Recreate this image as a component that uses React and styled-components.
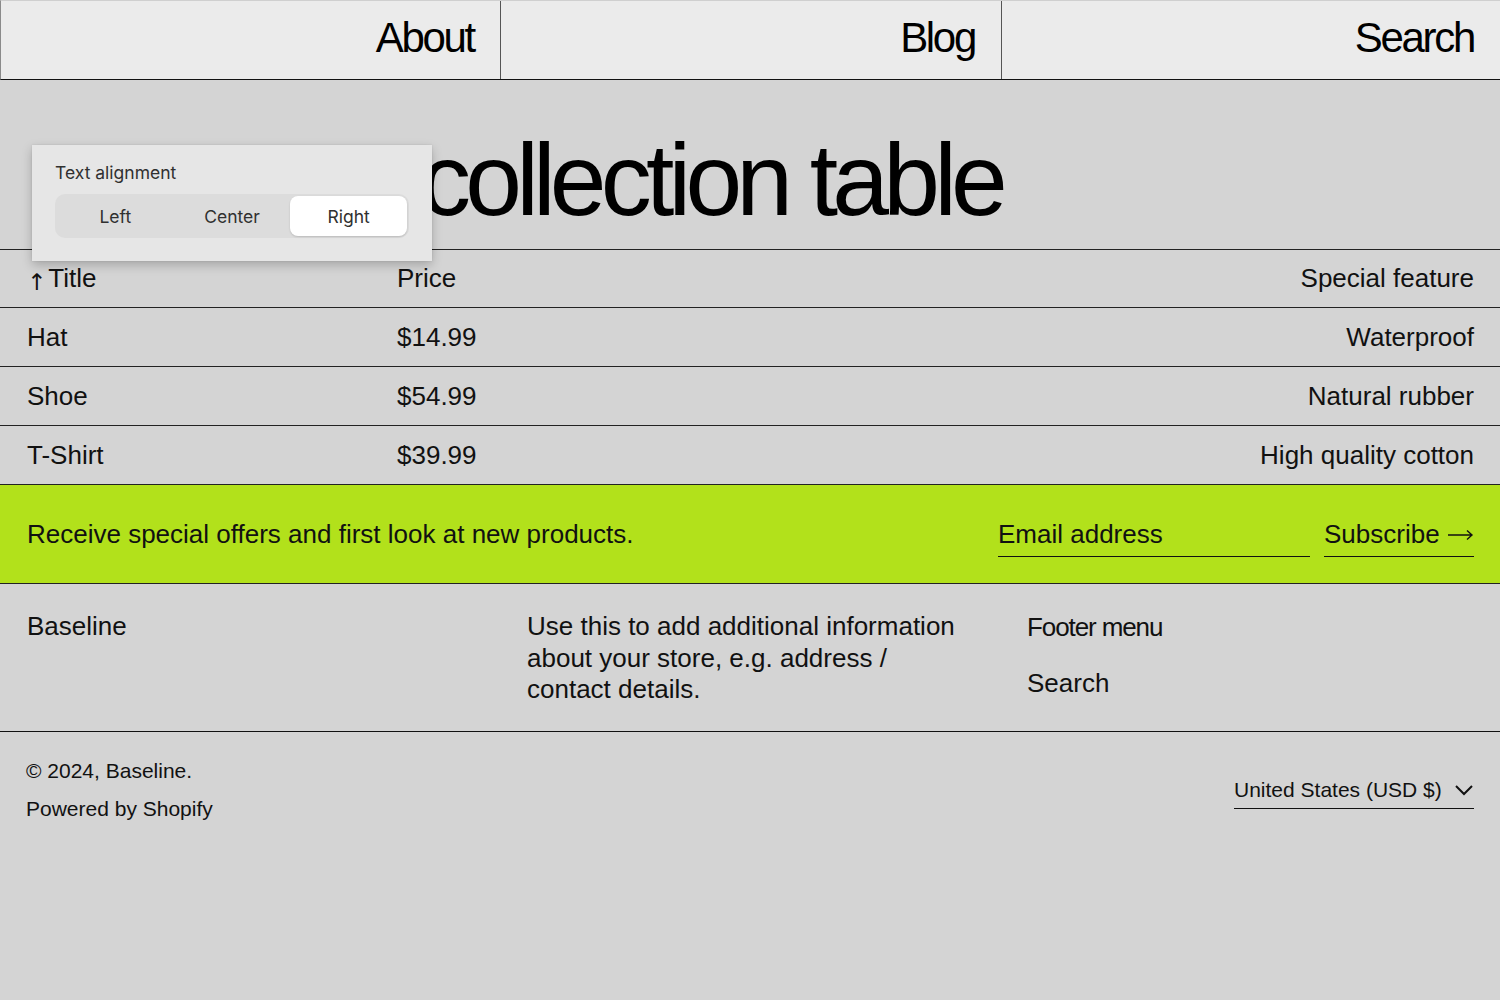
import React from "react";
import styled, { createGlobalStyle } from "styled-components";

const Global = createGlobalStyle`
  html, body {
    margin: 0;
    padding: 0;
    background: #d4d4d4;
    font-family: "Liberation Sans", Arial, sans-serif;
    color: #111;
  }
  * { box-sizing: border-box; }
`;

const Page = styled.div`
  position: relative;
  width: 1500px;
  min-height: 1000px;
  background: #d4d4d4;
`;

const Nav = styled.nav`
  display: grid;
  grid-template-columns: 500px 501px 499px;
  height: 80px;
  background: #ebebeb;
  border-top: 1px solid #cfcfcf;
  border-left: 1px solid #8a8a8a;
  border-bottom: 1px solid #111;
`;

const NavItem = styled.a`
  display: flex;
  align-items: center;
  justify-content: flex-end;
  padding: 0 26px 4px 0;
  font-size: 42px;
  letter-spacing: -2.3px;
  color: #000;
  border-right: 1px solid ${(p) => (p.$last ? "#8a8a8a" : "#555")};
`;

const Hero = styled.div`
  height: 170px;
  padding: 49px 0 0 420px;
  border-bottom: 1px solid #222;
  overflow: hidden;
`;

const Heading = styled.h1`
  margin: 0;
  font-size: 102px;
  font-weight: 400;
  line-height: 1;
  letter-spacing: -5.8px;
  color: #000;
  white-space: nowrap;
`;

const Row = styled.div`
  display: grid;
  grid-template-columns: 370px 1fr auto;
  align-items: center;
  height: ${(p) => (p.$head ? "58px" : "59px")};
  padding: 0 26px 0 27px;
  border-bottom: 1px solid #222;
  font-size: 26px;
`;

const Cell = styled.div`
  text-align: ${(p) => p.$align || "left"};
`;

const Arrow = styled.span`
  font-family: "DejaVu Sans", sans-serif;
  font-size: 23px;
  margin-right: 2px;
  position: relative;
  top: 3px;
`;

const Newsletter = styled.div`
  display: flex;
  align-items: center;
  height: 99px;
  padding: 0 26px 0 27px;
  background: #b2e11b;
  border-bottom: 1px solid #222;
  font-size: 26px;
`;

const Offer = styled.div`
  flex: 1;
`;

const EmailField = styled.div`
  width: 312px;
  padding: 2px 0 6px;
  border-bottom: 1px solid #111;
  margin-top: 6px;
`;

const SubscribeBtn = styled.div`
  width: 150px;
  margin-left: 14px;
  margin-top: 6px;
  padding: 2px 0 6px;
  border-bottom: 1px solid #111;
  display: flex;
  justify-content: space-between;
  align-items: center;
`;

const Footer = styled.footer`
  display: grid;
  grid-template-columns: 500px 500px 500px;
  height: 148px;
  border-bottom: 1px solid #111;
  padding-top: 27px;
  font-size: 26px;
`;

const FooterCol = styled.div`
  padding: 0 26px 0 27px;
  line-height: 31.5px;
`;

const FooterMenu = styled.div`
  display: flex;
  flex-direction: column;
  gap: 24px;
  line-height: 32px;
`;

const MenuHeading = styled.div`
  letter-spacing: -1.1px;
`;

const Bottom = styled.div`
  display: flex;
  justify-content: space-between;
  align-items: center;
  padding: 26px 26px 0 26px;
  font-size: 21px;
`;

const Legal = styled.div`
  display: flex;
  flex-direction: column;
  gap: 13px;
  line-height: 25px;
`;

const Country = styled.div`
  display: flex;
  align-items: center;
  justify-content: space-between;
  width: 240px;
  padding: 0 0 6px 0;
  border-bottom: 1px solid #111;
  margin-top: 8px;
`;

const Popover = styled.div`
  position: absolute;
  left: 32px;
  top: 145px;
  width: 400px;
  height: 116px;
  padding: 17px 23px;
  background: #e6e6e6;
  box-shadow: 0 4px 10px rgba(0, 0, 0, 0.22), 0 0 2px rgba(0, 0, 0, 0.1);
  font-family: Inter, "Noto Sans", sans-serif;
  color: #303030;
`;

const PopLabel = styled.div`
  font-size: 17.5px;
  margin-bottom: 11px;
`;

const Segments = styled.div`
  display: grid;
  grid-template-columns: 1fr 1fr 1fr;
  height: 44px;
  padding: 2px;
  background: #dcdcdc;
  border-radius: 10px;
`;

const Segment = styled.div`
  display: flex;
  align-items: center;
  justify-content: center;
  font-size: 17.5px;
  border-radius: 8px;
  background: ${(p) => (p.$active ? "#fff" : "transparent")};
  box-shadow: ${(p) => (p.$active ? "0 1px 2px rgba(0,0,0,0.15)" : "none")};
`;

const products = [
  { title: "Hat", price: "$14.99", feature: "Waterproof" },
  { title: "Shoe", price: "$54.99", feature: "Natural rubber" },
  { title: "T-Shirt", price: "$39.99", feature: "High quality cotton" },
];

const App = () => {
  return (
    <Page>
      <Global />
      <Nav>
        <NavItem>About</NavItem>
        <NavItem>Blog</NavItem>
        <NavItem $last>Search</NavItem>
      </Nav>
      <Hero>
        <Heading>collection table</Heading>
      </Hero>
      <Row $head>
        <Cell>
          <Arrow>↑</Arrow>Title
        </Cell>
        <Cell>Price</Cell>
        <Cell $align="right">Special feature</Cell>
      </Row>
      {products.map((p) => (
        <Row key={p.title}>
          <Cell>{p.title}</Cell>
          <Cell>{p.price}</Cell>
          <Cell $align="right">{p.feature}</Cell>
        </Row>
      ))}
      <Newsletter>
        <Offer>Receive special offers and first look at new products.</Offer>
        <EmailField>Email address</EmailField>
        <SubscribeBtn>
          <span>Subscribe</span>
          <svg width="26" height="12" viewBox="0 0 26 12" fill="none" stroke="#111" strokeWidth="1.4">
            <path d="M0 6h24M19 1.5l5 4.5-5 4.5" />
          </svg>
        </SubscribeBtn>
      </Newsletter>
      <Footer>
        <FooterCol>Baseline</FooterCol>
        <FooterCol>
          Use this to add additional information about your store, e.g. address / contact details.
        </FooterCol>
        <FooterCol>
          <FooterMenu>
            <MenuHeading>Footer menu</MenuHeading>
            <div>Search</div>
          </FooterMenu>
        </FooterCol>
      </Footer>
      <Bottom>
        <Legal>
          <div>© 2024, Baseline.</div>
          <div>Powered by Shopify</div>
        </Legal>
        <Country>
          <span>United States (USD $)</span>
          <svg width="20" height="12" viewBox="0 0 20 12" fill="none" stroke="#111" strokeWidth="2">
            <path d="M2 2l8 8 8-8" />
          </svg>
        </Country>
      </Bottom>
      <Popover>
        <PopLabel>Text alignment</PopLabel>
        <Segments>
          <Segment>Left</Segment>
          <Segment>Center</Segment>
          <Segment $active>Right</Segment>
        </Segments>
      </Popover>
    </Page>
  );
};

export default App;
